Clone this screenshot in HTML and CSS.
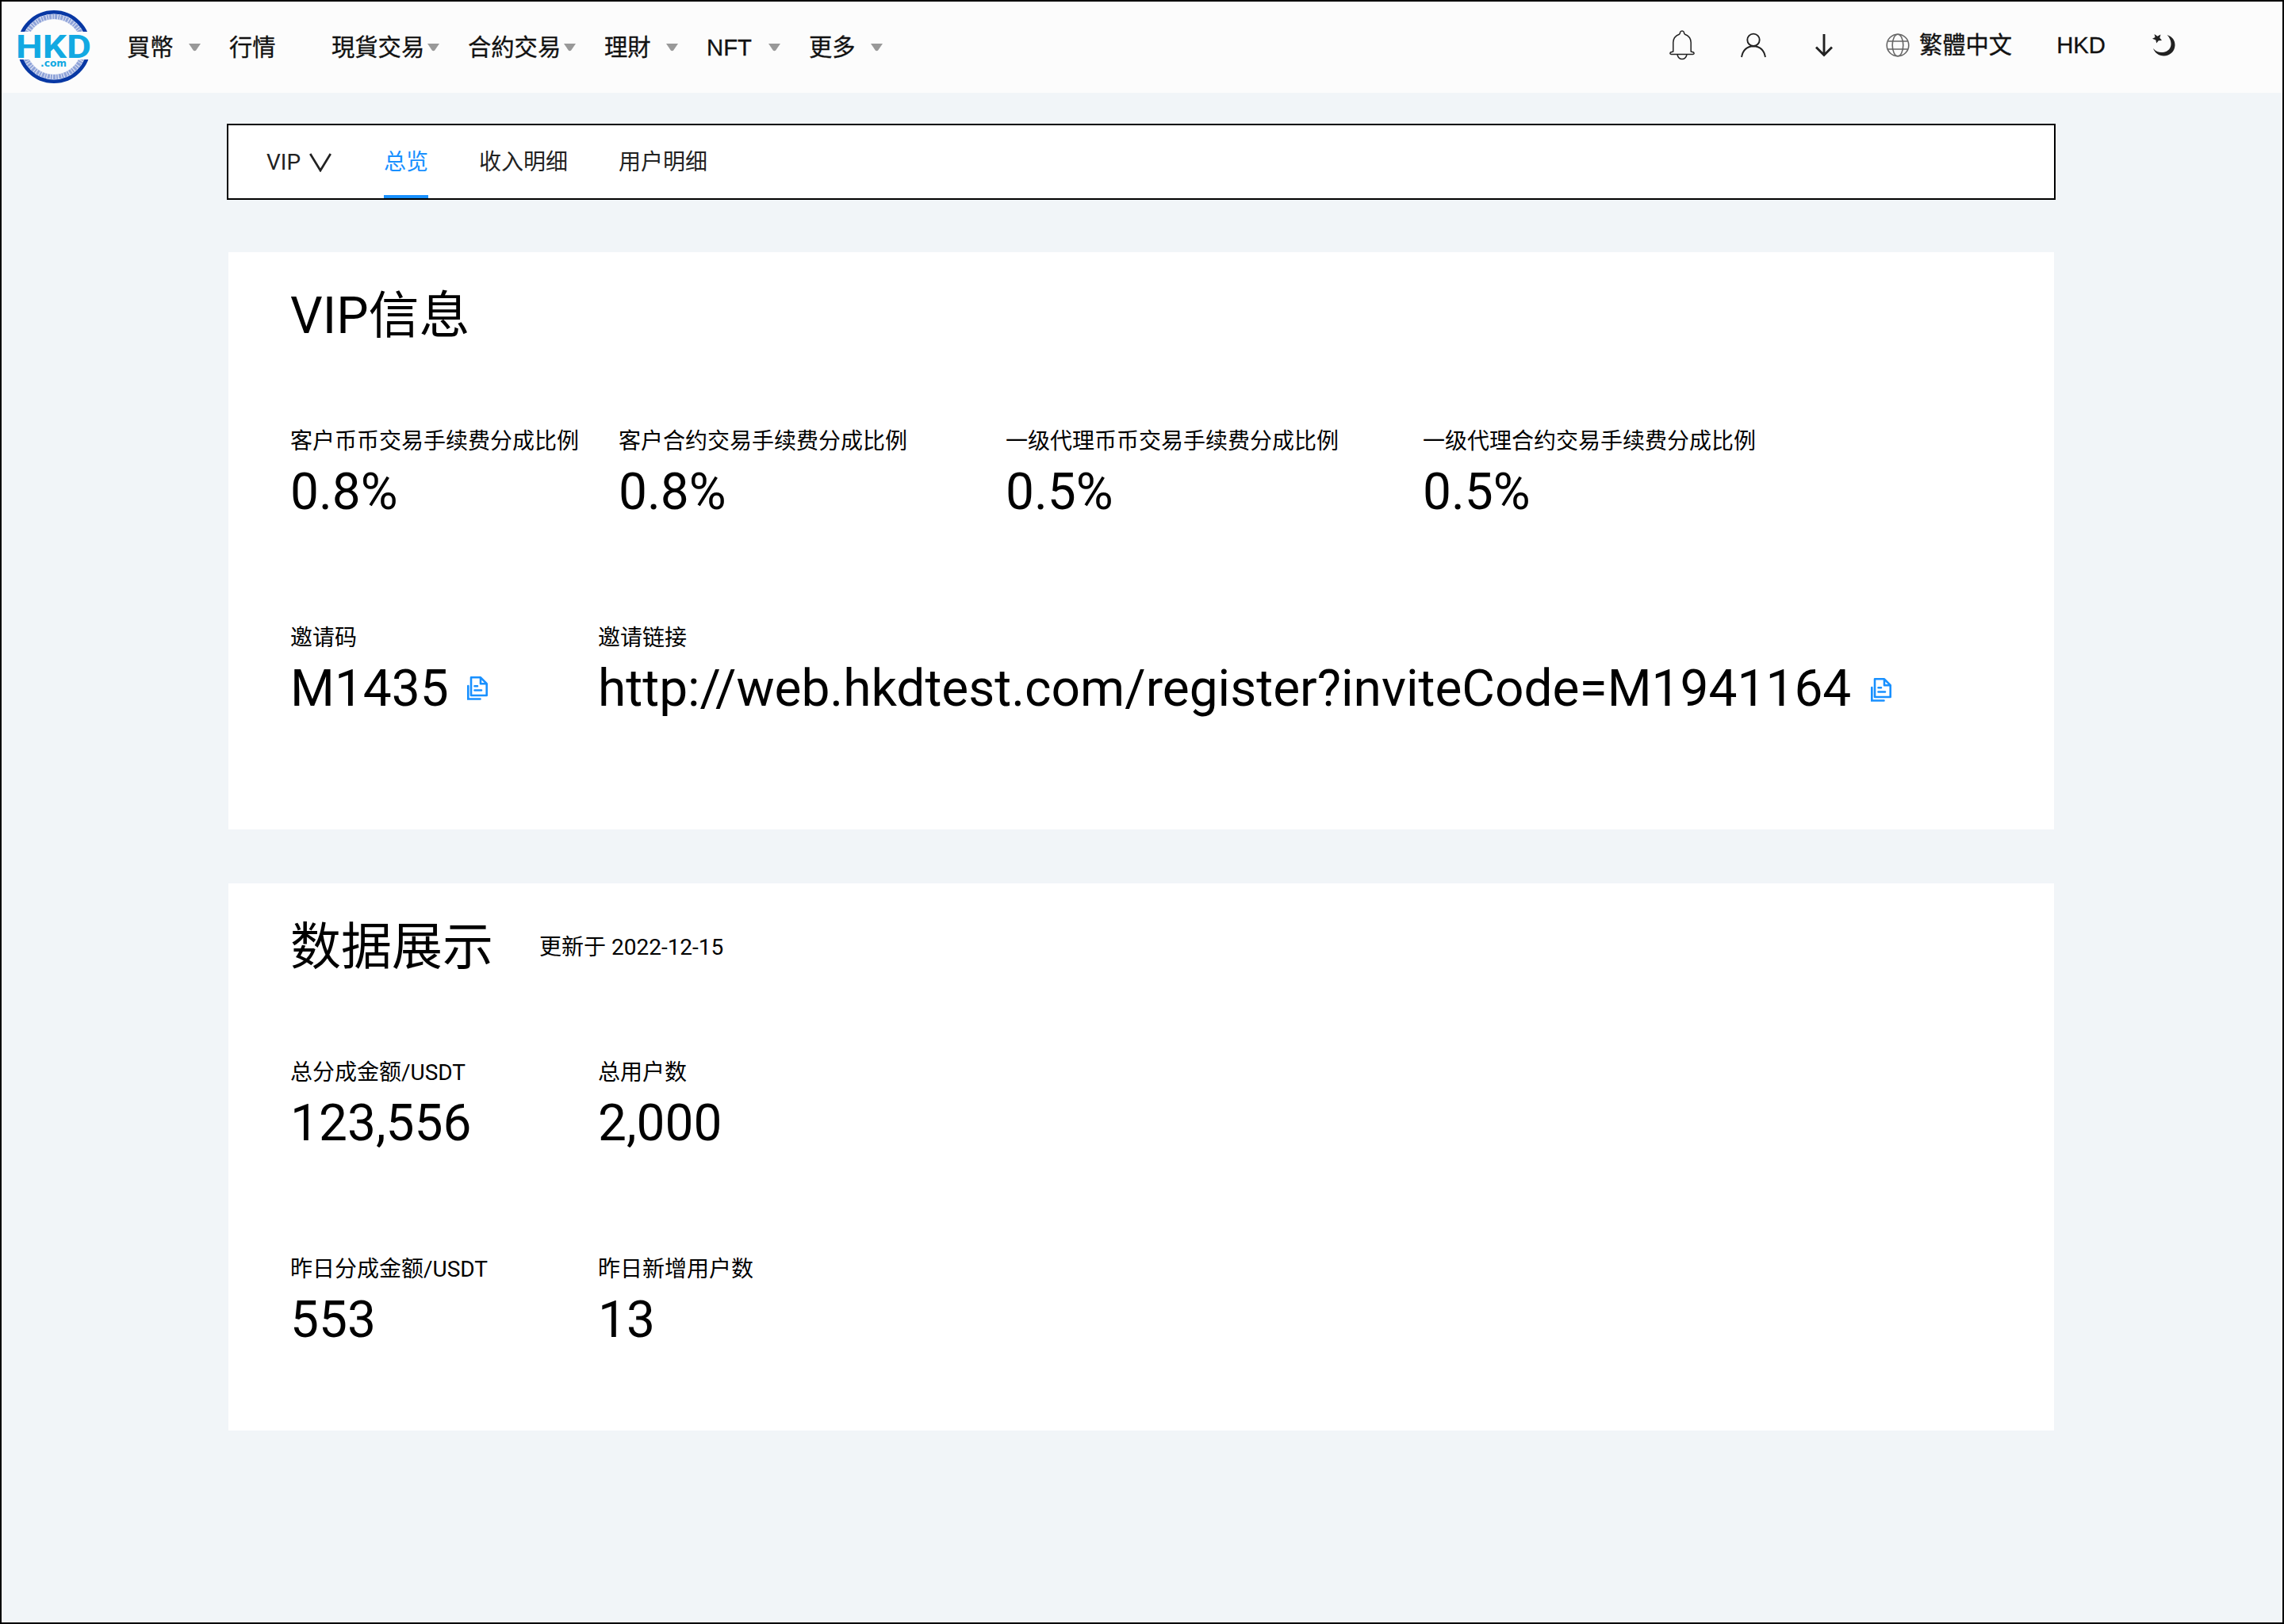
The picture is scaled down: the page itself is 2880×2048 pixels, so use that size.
FILE: index.html
```html
<!DOCTYPE html>
<html lang="zh">
<head>
<meta charset="utf-8">
<title>VIP信息</title>
<link rel="stylesheet" href="styles.css">
</head>
<body>
<svg class="defs" width="0" height="0">
  <symbol id="caret" viewBox="0 0 15 10"><path d="M0 0H15L9.200 8.500Q7.500 10 5.800 8.500Z" fill="#999"/></symbol>
  <symbol id="copy" viewBox="0 0 26 30">
    <path d="M5 1.300H17L24.700 9.200V24H5Z M17 1.300V9.200H24.700" fill="none" stroke="#1890ff" stroke-width="2.600" stroke-linejoin="round"/>
    <path d="M1.300 12V28.500H16.500 M9.500 12.200H13 M9.500 17.500H18" fill="none" stroke="#1890ff" stroke-width="2.600" stroke-linecap="round"/>
  </symbol>
</svg>
<div class="page">
  <header class="header">
    <svg class="logo" width="94" height="94" viewBox="0 0 94 94">
      <circle cx="47" cy="47" r="38" fill="none" stroke="#dde3f4" stroke-width="7"/>
      <circle cx="47" cy="47" r="38" fill="none" stroke="#8fa3d8" stroke-width="6" stroke-dasharray="3 1.200 2 1"/>
      <circle cx="47" cy="47" r="43.800" fill="none" stroke="#0838a4" stroke-width="4.600"/>
      <rect x="0" y="28" width="94" height="35" fill="#fcfcfc"/>
      <text class="logo-name" x="-1" y="61" textLength="95" lengthAdjust="spacingAndGlyphs">HKD</text>
      <text class="logo-com" x="30" y="72" textLength="33" lengthAdjust="spacingAndGlyphs">.com</text>
    </svg>
    <nav class="nav">
      <a class="nav-item">買幣<svg width="15" height="10"><use href="#caret"/></svg></a>
      <a class="nav-item">行情</a>
      <a class="nav-item nav-wide">現貨交易<svg width="15" height="10"><use href="#caret"/></svg></a>
      <a class="nav-item nav-wide">合約交易<svg width="15" height="10"><use href="#caret"/></svg></a>
      <a class="nav-item">理財<svg width="15" height="10"><use href="#caret"/></svg></a>
      <a class="nav-item">NFT<svg width="15" height="10"><use href="#caret"/></svg></a>
      <a class="nav-item">更多<svg width="15" height="10"><use href="#caret"/></svg></a>
    </nav>
    <div class="tools">
      <svg class="bell" width="32" height="38" viewBox="0 0 32 38" fill="none" stroke="#222" stroke-width="1.500" stroke-linejoin="round">
        <path d="M4.800 27V15.500Q5 8 12.500 5.200Q13.500 4.500 13.500 3Q14 1 16 1T18.500 3Q18.500 4.500 19.500 5.200Q27 8 27.200 15.500V27L30.500 28Q32 30.200 29.500 30.500H2.500Q0 30.200 1.500 28Z"/>
        <path d="M10 31Q11.500 36.500 16 36.500T22 31"/>
      </svg>
      <svg class="user" width="32" height="32" viewBox="0 0 32 32" fill="none" stroke="#222" stroke-width="1.900">
        <circle cx="16" cy="9.300" r="7.700"/><path d="M1 31Q3.500 17.500 16 17.200Q28.500 17.500 31 31"/>
      </svg>
      <svg class="down" width="22" height="30" viewBox="0 0 22 30" fill="none" stroke="#222" stroke-width="2.900">
        <path d="M11 1V27M1 17.500L11 27.500L21 17.500"/>
      </svg>
      <span class="lang">
        <svg width="30" height="30" viewBox="0 0 30 30" fill="none" stroke="#666" stroke-width="1.600">
          <circle cx="15" cy="15" r="13.800"/><ellipse cx="15" cy="15" rx="6.800" ry="13.800"/><path d="M2.500 10H27.500M2.500 20H27.500"/>
        </svg>繁體中文
      </span>
      <span class="currency">HKD</span>
      <svg class="moon" width="30" height="28" viewBox="0 0 30 28" fill="#222">
        <path d="M18.500 1C25 3 29 8 28.500 14.500C28 22 22 27.500 14.500 27.500C8 27.500 3 23.500 1 18C5 22.500 9 23.500 13.500 23C20 22 24 17.500 23.500 11.500C23.200 7.500 21.500 4 18.500 1Z"/>
        <path d="M2.500 0L6.500 2.800L10.500 .5L9.300 4.800L12 8L7.800 8.200L5.200 11.500L4.300 7.500L0 5.800L3.500 4Z"/>
      </svg>
    </div>
  </header>

  <main class="content">
    <div class="tabs">
      <a class="tab vip">VIP<svg width="28" height="24" viewBox="0 0 28 24"><path d="M1.200 1L14 22L26.800 1" fill="none" stroke="#222" stroke-width="2.700"/></svg></a>
      <a class="tab active">总览</a>
      <a class="tab">收入明细</a>
      <a class="tab">用户明细</a>
    </div>

    <section class="card card-vip">
      <div class="card-head"><h2 class="title">VIP信息</h2></div>
      <div class="stats rates">
        <div><div class="label">客户币币交易手续费分成比例</div><div class="value">0.8%</div></div>
        <div><div class="label">客户合约交易手续费分成比例</div><div class="value">0.8%</div></div>
        <div><div class="label">一级代理币币交易手续费分成比例</div><div class="value">0.5%</div></div>
        <div><div class="label">一级代理合约交易手续费分成比例</div><div class="value">0.5%</div></div>
      </div>
      <div class="stats pair">
        <div><div class="label">邀请码</div><div class="value">M1435<svg class="copy" width="26" height="30"><use href="#copy"/></svg></div></div>
        <div><div class="label">邀请链接</div><div class="value">http://web.hkdtest.com/register?inviteCode=M1941164<svg class="copy copy-link" width="26" height="30"><use href="#copy"/></svg></div></div>
      </div>
    </section>

    <section class="card card-data">
      <div class="card-head"><h2 class="title">数据展示</h2><span class="label">更新于 2022-12-15</span></div>
      <div class="stats pair">
        <div><div class="label">总分成金额/USDT</div><div class="value">123,556</div></div>
        <div><div class="label">总用户数</div><div class="value">2,000</div></div>
      </div>
      <div class="stats pair">
        <div><div class="label">昨日分成金额/USDT</div><div class="value">553</div></div>
        <div><div class="label">昨日新增用户数</div><div class="value">13</div></div>
      </div>
    </section>
  </main>
</div>
</body>
</html>
```
FILE: styles.css
```css
* { box-sizing: border-box; }
body {
  margin: 0;
  font-family: Roboto, "Noto Sans CJK SC", sans-serif;
  color: #000;
}
svg { display: block; flex: none; }
.defs { position: absolute; }
.page {
  width: 2880px;
  height: 2048px;
  border: 2px solid #000;
  background: #f1f5f8;
}
.header {
  display: flex;
  align-items: center;
  height: 115px;
  padding: 0 134px 0 19px;
  background: #fcfcfc;
  font-family: "Liberation Sans", "Noto Sans CJK TC", sans-serif;
  font-size: 29.300px;
  line-height: 40px;
  color: #111;
  -webkit-text-stroke: .3px #111;
}
.logo { margin-top: -1px; -webkit-text-stroke: 0; }
.logo-name { font: 700 41px Roboto, sans-serif; fill: #12a9e2; }
.logo-com { font: 700 13px "DejaVu Sans", sans-serif; fill: #12a9e2; }
.nav { display: flex; gap: 36px; margin-left: 45px; }
.nav-item {
  display: flex;
  align-items: center;
  justify-content: space-between;
  width: 93px;
}
.nav-wide { width: 136px; }
.tools { display: flex; align-items: center; margin-left: auto; padding-bottom: 5px; }
.bell { margin-top: -1px; }
.user { margin-left: 58px; }
.down { margin-left: 62px; margin-top: -1px; }
.lang { display: flex; align-items: center; gap: 12px; margin-left: 67px; }
.currency { margin-left: 56px; }
.moon { margin-left: 59px; margin-top: -1px; }

.content { width: 2306px; margin: 39px 0 0 284px; }
.tabs {
  display: flex;
  gap: 64px;
  height: 96px;
  padding-left: 48px;
  border: 2px solid #000;
  background: #fff;
}
.tab {
  display: flex;
  align-items: center;
  border-bottom: 4px solid transparent;
  padding-top: 5px;
  font-size: 28px;
  line-height: 40px;
  color: #222;
}
.tab.vip { width: 82px; margin-right: 2px; justify-content: space-between; }
.tab.active { color: #1890ff; border-color: #1890ff; }

.card {
  width: 2302px;
  margin-left: 2px;
  padding: 41px 78px 0;
  background: #fff;
}
.card-vip { height: 728px; margin-top: 66px; }
.card-data { height: 690px; margin-top: 68px; }
.card-head { display: flex; align-items: center; gap: 58px; margin-bottom: 98px; }
.title { margin: 0; font-size: 64px; font-weight: 400; line-height: 80px; }
.label { font-size: 28px; line-height: 40px; white-space: nowrap; }
.stats { display: grid; margin-bottom: 124px; }
.rates { grid-template-columns: 414px 488px 526px 1fr; }
.pair { grid-template-columns: 388px 1fr; }
.value {
  display: flex;
  align-items: center;
  margin-top: 4px;
  font-size: 64px;
  line-height: 80px;
  white-space: nowrap;
}
.copy { margin-left: 23px; margin-top: -2px; }
.copy-link { margin-left: 25px; margin-top: 2px; }
```
